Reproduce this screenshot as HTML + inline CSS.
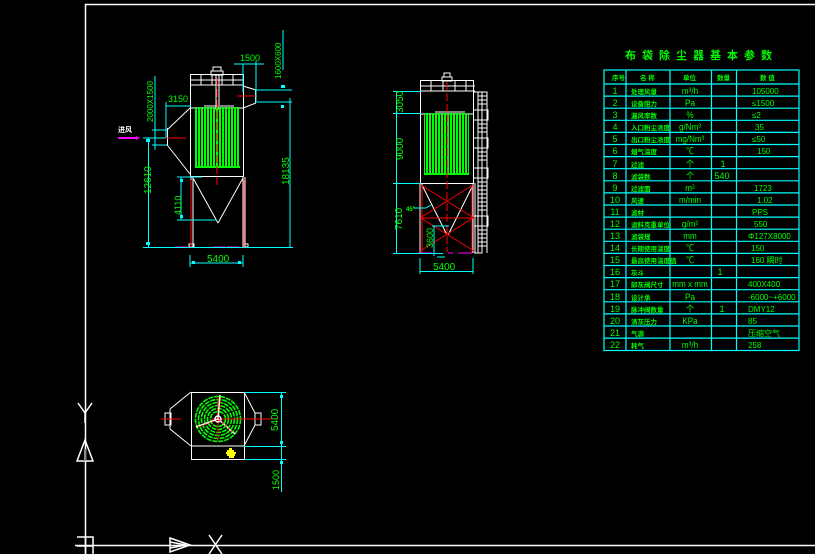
<!DOCTYPE html>
<html><head><meta charset="utf-8"><style>
html,body{margin:0;padding:0;background:#000;width:815px;height:554px;overflow:hidden}
svg{display:block}
text{font-family:"Liberation Sans","Noto Sans CJK SC",sans-serif}
.g{fill:#00ff00}
.tn{fill:#00ff00;font-size:9px;text-anchor:middle}
.nm{fill:#00ff00;font-size:6.5px;font-weight:bold}
</style></head><body>
<svg width="815" height="554" viewBox="0 0 815 554" xmlns="http://www.w3.org/2000/svg">
<defs>
<pattern id="bars" width="3" height="10" patternUnits="userSpaceOnUse"><rect x="0" y="0" width="2" height="10" fill="#00ff00"/></pattern>
</defs>
<g stroke="#fff" stroke-width="1.5" fill="none">
<path d="M85.5 554V4.5H815"/>
<path d="M75 545.5H815"/>
<path d="M77 537h16v17M77 546h16"/>
<path d="M85.5 537V554"/>
<path d="M78 403l7 10 7-10M85 413v10"/>
<path d="M77 461l8-21 8 21z"/>
<path d="M170 538l20 7-20 7z M170 542l16 3-16 3"/>
<path d="M209 535l13 19M222 535l-13 19"/>
</g>
<rect x="84" y="449" width="2" height="12" fill="#888"/>

<text x="625" y="59" class="g" font-size="11" font-weight="bold" letter-spacing="6">布袋除尘器基本参数</text>

<g stroke="#00ffff" stroke-width="1.2" fill="none">
<rect x="604" y="70" width="195" height="280.5"/>
<path d="M626 70v280.5M670 70v280.5M711.5 70v280.5M736.5 70v280.5"/>
<path d="M604 84H799M604 96.1H799M604 108.2H799M604 120.3H799M604 132.4H799M604 144.5H799M604 156.6H799M604 168.7H799M604 180.8H799M604 192.9H799M604 205H799M604 217.1H799M604 229.2H799M604 241.3H799M604 253.4H799M604 265.5H799M604 277.6H799M604 289.7H799M604 301.8H799M604 313.9H799M604 326H799M604 338.1H799"/>
</g>
<g class="nm">
<text x="612" y="80">序号</text><text x="640" y="80">名  称</text><text x="683" y="80">单位</text><text x="717" y="80">数量</text><text x="760" y="80">数  值</text>
</g>
<g class="tn">
<text x="615" y="94">1</text><text x="615" y="106">2</text><text x="615" y="118">3</text><text x="615" y="130">4</text><text x="615" y="142">5</text><text x="615" y="154">6</text><text x="615" y="167">7</text><text x="615" y="179">8</text><text x="615" y="191">9</text><text x="615" y="203">10</text><text x="615" y="215">11</text><text x="615" y="227">12</text><text x="615" y="239">13</text><text x="615" y="251">14</text><text x="615" y="263">15</text><text x="615" y="275">16</text><text x="615" y="287">17</text><text x="615" y="300">18</text><text x="615" y="312">19</text><text x="615" y="324">20</text><text x="615" y="336">21</text><text x="615" y="348">22</text>
</g>
<g class="nm">
<text x="631" y="94">处理风量</text><text x="631" y="106">设备阻力</text><text x="631" y="118">漏风率数</text><text x="631" y="130">入口粉尘浓度</text><text x="631" y="142">出口粉尘浓度</text><text x="631" y="154">烟气温度</text><text x="631" y="167">过滤</text><text x="631" y="179">滤袋数</text><text x="631" y="191">过滤面</text><text x="631" y="203">风速</text><text x="631" y="215">滤材</text><text x="631" y="227">滤料克重单位</text><text x="631" y="239">滤袋规</text><text x="631" y="251">长期使用温度</text><text x="631" y="263">最高使用温度值</text><text x="631" y="275">灰斗</text><text x="631" y="287">卸灰阀尺寸</text><text x="631" y="300">设计承</text><text x="631" y="312">脉冲阀数量</text><text x="631" y="324">清灰压力</text><text x="631" y="336">气源</text><text x="631" y="348">耗气</text>
</g>
<g class="tn" font-size="8" transform="translate(690,0) scale(0.9,1) translate(-690,0)">
<text x="690" y="94">m³/h</text><text x="690" y="106">Pa</text><text x="690" y="118">%</text><text x="690" y="130">g/Nm³</text><text x="690" y="142">mg/Nm³</text><text x="690" y="154">℃</text><text x="690" y="167">个</text><text x="690" y="179">个</text><text x="690" y="191">m²</text><text x="690" y="203">m/min</text><text x="690" y="227">g/m²</text><text x="690" y="239">mm</text><text x="690" y="251">℃</text><text x="690" y="263">℃</text><text x="690" y="287">mm x mm</text><text x="690" y="300">Pa</text><text x="690" y="312">个</text><text x="690" y="324">KPa</text><text x="690" y="348">m³/h</text>
</g>
<g class="tn" font-size="8">
<text x="723" y="167">1</text><text x="722" y="179">540</text><text x="720" y="275">1</text><text x="722" y="312">1</text>
</g>
<g class="g" font-size="8">
<text x="752" y="94">105000</text><text x="752" y="106">≤1500</text><text x="752" y="118">≤2</text><text x="755" y="130">35</text><text x="752" y="142">≤50</text><text x="757" y="154">150</text><text x="754" y="191">1723</text><text x="757" y="203">1.02</text><text x="752" y="215">PPS</text><text x="754" y="227">550</text><text x="748" y="239">Φ127X8000</text><text x="751" y="251">150</text><text x="751" y="263">160 瞬时</text><text x="748" y="287">400X400</text><text x="748" y="300">-6000~+6000</text><text x="748" y="312">DMY12</text><text x="748" y="324">85</text><text x="748" y="336">压缩空气</text><text x="748" y="348">258</text>
</g>

<!-- LEFT ELEVATION -->
<g stroke="#fff" stroke-width="1" fill="none">
<rect x="190.5" y="74.5" width="53" height="102"/>
<path d="M190 80h53M190 85h53M201 74v11M212 74v11M222 74v11M233 74v11"/>
<rect x="213" y="67" width="8" height="4"/><rect x="211" y="71" width="12" height="4"/>
<path d="M216 75v35M219 75v35"/>
<path d="M204 106h14M220 106h14M190 108h53"/>
<path d="M190 108l-22 21M168 146l22 28M167.5 128v18"/>
<path d="M243 86l13 4M243 108l13-5M255.5 90v13"/>
<path d="M191 177v70M193 177v70M243 177v70M245 177v70"/>
<path d="M193 178l25 45M243 178l-25 45"/>
<rect x="189" y="244" width="5" height="3"/><rect x="243" y="244" width="5" height="3"/>
</g>
<rect x="195" y="107" width="45" height="61" fill="url(#bars)"/>
<rect x="195" y="166" width="45" height="2" fill="#00ff00"/>
<g stroke="#f00" stroke-width="1" fill="none">
<path d="M217 78v110" stroke-dasharray="8 3"/>
<path d="M164 138h22M237 96h20"/>
<path d="M191 180v67M244 180v67"/>
</g>
<path d="M175 247h12M213 247h12M227 247h12" stroke="#f0f" stroke-width="1"/>
<path d="M118 138h20" stroke="#f0f" stroke-width="2"/>
<path d="M136 136l4 2-4 2z" fill="#f0f"/>
<text x="118" y="132" fill="#fff" font-size="7" font-weight="bold">进风</text>
<g stroke="#00ffff" stroke-width="1" fill="none">
<path d="M143 138h22M152 130h15M152 145h15M155 76v74M148.5 138v110"/>
<path d="M166 106h25M166 102v36"/>
<path d="M143 247.5h150"/>
<path d="M290 98v150M255 90h37M255 102h37M283 30v40M234 64h30M243 64v28M256 61v40"/>
<path d="M177 177h25M177 220h40M181 177v43"/>
<path d="M190 255v12M243 255v12M190 263h53"/>
</g>
<g fill="#00ffff">
<rect x="146" y="139" width="4" height="3"/><rect x="146" y="242" width="4" height="3"/>
<rect x="180" y="179" width="3" height="3"/><rect x="180" y="215" width="3" height="3"/>
<rect x="192" y="261" width="3" height="3"/><rect x="238" y="261" width="3" height="3"/>
<rect x="281" y="85" width="4" height="3"/><rect x="281" y="105" width="3" height="3"/>
</g>
<g class="g" font-size="10">
<text x="168" y="102" font-size="9">3150</text>
<text x="240" y="61" font-size="9">1500</text>
<text x="207" y="262" font-size="10">5400</text>
<text transform="translate(151,194) rotate(-90)" font-size="10">12610</text>
<text transform="translate(181,215) rotate(-90)" font-size="9">4110</text>
<text transform="translate(289,185) rotate(-90)" font-size="10">18135</text>
<text transform="translate(153,122) rotate(-90)" font-size="8">2000X1500</text>
<text transform="translate(281,79) rotate(-90)" font-size="8">1600X600</text>
</g>

<!-- MIDDLE ELEVATION -->
<g stroke="#fff" stroke-width="1" fill="none">
<rect x="420.5" y="80.5" width="53" height="103"/>
<path d="M420 86h55M420 91h55M431 80v11M443 80v11M455 80v11M466 80v11"/>
<rect x="444" y="73" width="6" height="4"/><rect x="442" y="77" width="10" height="4"/>
<path d="M435 112h30M421 114h52"/>
<path d="M420 183v70M422 183v70M473 183v70M475 183v70"/>
<path d="M422 185l25 50M473 185l-25 50"/>
<path d="M474 92h8v161h-8M482 92h5v161M478 92v161"/>
<path d="M474 110h14v10h-14M474 138h14v10h-14M474 168h14v10h-14M474 216h14v10h-14"/>
<path d="M478 96h9M478 100h9M478 104h9M478 124h9M478 128h9M478 132h9M478 152h9M478 156h9M478 160h9M478 182h9M478 186h9M478 190h9M478 194h9M478 198h9M478 202h9M478 206h9M478 210h9M478 230h9M478 234h9M478 238h9M478 242h9M478 246h9"/>
</g>
<rect x="424" y="113" width="45" height="60" fill="url(#bars)"/>
<rect x="424" y="173" width="45" height="2" fill="#00ff00"/>
<g stroke="#f00" stroke-width="1" fill="none">
<path d="M447 82v170" stroke-dasharray="8 3"/>
<path d="M421 185l53 33M473 185l-53 33M421 218l53 33M473 218l-53 33M421 218h53M422 185v68M472 185v68"/>
</g>
<path d="M420 253h12M448 253h5M458 253h14" stroke="#f0f" stroke-width="1"/>
<g stroke="#00ffff" stroke-width="1" fill="none">
<path d="M393 91.5h28M393 113.5h28M393 183.5h28M393 253.5h50M396.5 91v163"/>
<path d="M413 208h13l5-3M432 226h17M434 226v30M437 257h8"/>
<path d="M420 258v16M473 258v16M420 271.5h53"/>
</g>
<text x="406" y="211" class="g" font-size="6" font-weight="bold">45°</text>
<g class="g">
<text transform="translate(403,113) rotate(-90)" font-size="10">3050</text>
<text transform="translate(403,160) rotate(-90)" font-size="10">9000</text>
<text transform="translate(402,230) rotate(-90)" font-size="10">7610</text>
<text transform="translate(433,248) rotate(-90)" font-size="9">3600</text>
<text x="433" y="270" font-size="10">5400</text>
</g>

<!-- PLAN VIEW -->
<g stroke="#fff" stroke-width="1" fill="none">
<rect x="191.5" y="392.5" width="53" height="67"/>
<path d="M191 446h53"/>
<path d="M191 392l-21 17M191 446l-21-17M165 413h6v12h-6zM170 409v20"/>
<path d="M244 392l11 21M244 446l11-21M255 413h6v12h-6z"/>
</g>
<g fill="none" stroke="#00ff00" stroke-width="1.6" stroke-dasharray="5 1">
<circle cx="218" cy="419" r="22.5"/>
<circle cx="218" cy="419" r="19.5"/>
<circle cx="218" cy="419" r="16.5"/>
<circle cx="218" cy="419" r="13.5"/>
<circle cx="218" cy="419" r="10.5"/>
<circle cx="218" cy="419" r="7.5"/>
</g>
<path d="M161 419h20M212 419h66M218 397v44" stroke="#f00" stroke-width="1"/>
<g stroke="#fff" stroke-width="1.5" fill="none">
<path d="M218 419l2-24M218 419l-22 8M218 419l17 15"/>
<circle cx="218" cy="419" r="3"/>
</g>
<g stroke="#f00" stroke-width="1" fill="none" stroke-dasharray="2 2">
<path d="M219 419l2-22M218 420l-20 7M219 420l15 13"/>
</g>
<g fill="#ff0">
<rect x="229" y="448" width="3" height="2"/><rect x="227" y="450" width="7" height="2"/><rect x="226" y="452" width="10" height="2"/><rect x="227" y="454" width="8" height="2"/><rect x="229" y="456" width="5" height="2"/>
</g>
<g stroke="#00ffff" stroke-width="1" fill="none">
<path d="M244 392.5h42M244 446.5h42M244 459.5h42M281.5 392v100"/>
</g>
<g fill="#00ffff"><rect x="280" y="395" width="3" height="3"/><rect x="280" y="441" width="3" height="3"/><rect x="280" y="461" width="3" height="3"/></g>
<g class="g">
<text transform="translate(278,431) rotate(-90)" font-size="10">5400</text>
<text transform="translate(279,490) rotate(-90)" font-size="9">1500</text>
</g>
</svg>
</body></html>
